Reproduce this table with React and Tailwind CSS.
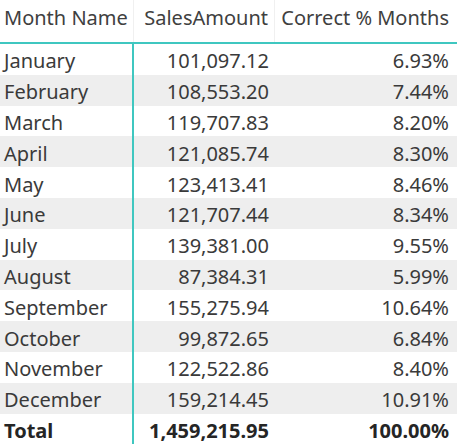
const rows = [
  ['January', '101,097.12', '6.93%'],
  ['February', '108,553.20', '7.44%'],
  ['March', '119,707.83', '8.20%'],
  ['April', '121,085.74', '8.30%'],
  ['May', '123,413.41', '8.46%'],
  ['June', '121,707.44', '8.34%'],
  ['July', '139,381.00', '9.55%'],
  ['August', '87,384.31', '5.99%'],
  ['September', '155,275.94', '10.64%'],
  ['October', '99,872.65', '6.84%'],
  ['November', '122,522.86', '8.40%'],
  ['December', '159,214.45', '10.91%'],
]

export default function App() {
  return (
    <div className="w-[457px] h-[445px] bg-white overflow-hidden text-[#3a3a3a] font-['Noto_Sans',sans-serif] text-[20px]">
      {/* Header */}
      <div className="flex h-[44px] border-b-2 border-[#3fc7c0] text-[#404040]">
        <div className="w-[134px] h-full flex items-center pb-[6px] pl-[4px] border-r border-[#f0f0f0]">Month Name</div>
        <div className="w-[141px] h-full flex items-center justify-end pb-[6px] pr-[6px] border-r border-[#f0f0f0]">SalesAmount</div>
        <div className="flex-1 h-full flex items-center justify-end pb-[6px] pr-[8px]">Correct % Months</div>
      </div>

      <div className="flex flex-col">
        {rows.map(([m, s, p], i) => (
          <div key={m} className={`flex h-[30.8px] ${i % 2 ? 'bg-[#eeeeee]' : 'bg-white'}`}>
            <div className="w-[134px] pl-[4px] pt-[4px] h-full flex items-center border-r-2 border-[#3fc7c0]">{m}</div>
            <div className="w-[141px] pr-[6px] pt-[4px] h-full flex items-center justify-end">{s}</div>
            <div className="flex-1 pr-[8px] pt-[4px] h-full flex items-center justify-end">{p}</div>
          </div>
        ))}
        <div className="flex h-[30px] font-bold text-[#252525]">
          <div className="w-[134px] pl-[4px] pt-[4px] h-full flex items-center border-r-2 border-[#3fc7c0]">Total</div>
          <div className="w-[141px] pr-[6px] pt-[4px] h-full flex items-center justify-end">1,459,215.95</div>
          <div className="flex-1 pr-[8px] pt-[4px] h-full flex items-center justify-end">100.00%</div>
        </div>
      </div>
    </div>
  )
}
